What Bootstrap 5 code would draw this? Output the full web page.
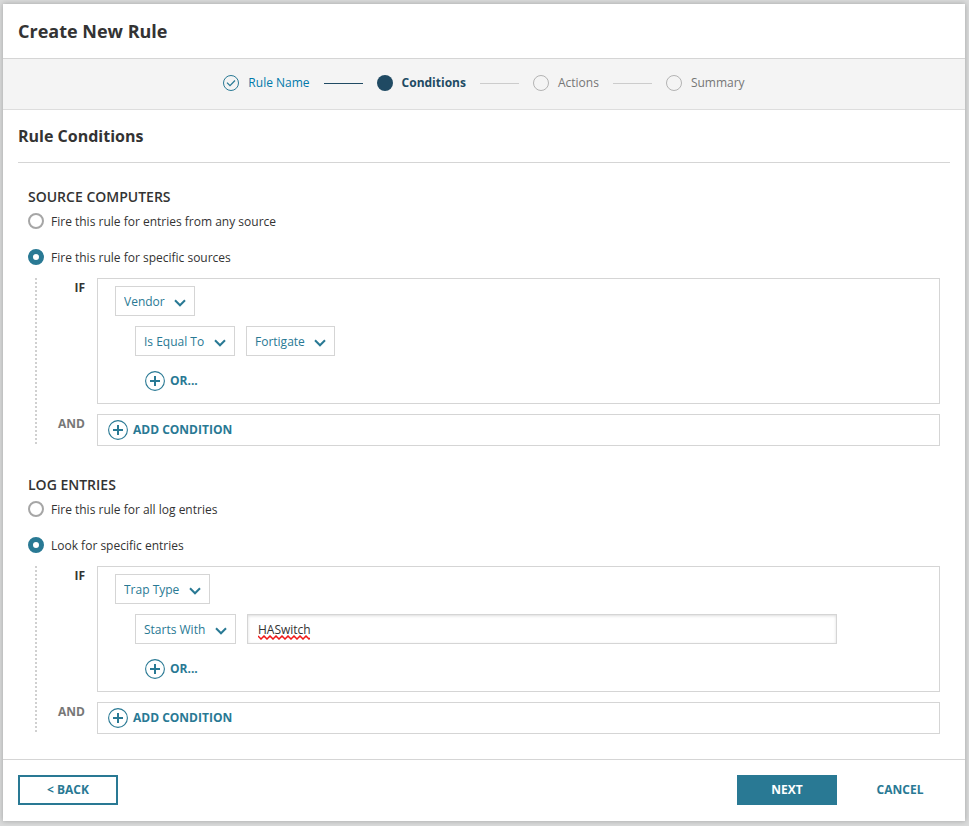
<!DOCTYPE html>
<html lang="en">
<head>
<meta charset="utf-8">
<meta name="viewport" content="width=device-width, initial-scale=1">
<title>Create New Rule</title>
<link href="https://cdn.jsdelivr.net/npm/bootstrap@5.3.0/dist/css/bootstrap.min.css" rel="stylesheet">
<style>
  :root { --teal: #297994; --navy: #204a63; --line: #d5d5d5; --ink: #333; }
  body { font-family: "Open Sans", "Noto Sans", sans-serif; font-size: 12px; line-height: 20px; color: var(--ink); background: #d9dada; padding: 4px 4px 5px 3px; }
  .dialog { background: #fff; box-shadow: 0 0 5px rgba(0,0,0,.25); }
  .dialog-head { padding: 15px 15px; border-bottom: 1px solid var(--line); }
  .dialog-head h1 { font-size: 18px; line-height: 24px; font-weight: 700; }
  .steps { background: #f4f4f4; border-bottom: 1px solid #ddd; padding: 14px 15px 16px; gap: 14px; }
  .step { display: flex; align-items: center; gap: 9px; color: #767676; text-decoration: none; }
  .step svg { width: 16px; height: 16px; flex: none; }
  .step-done { color: #0079aa; }
  .step-now { color: var(--navy); font-weight: 700; }
  .step-line { width: 39px; height: 1px; background: #ccc; }
  .step-line-done { background: var(--navy); }
  .dialog-main { padding: 0 15px; }
  .dialog-main h2 { font-size: 16px; line-height: 24px; font-weight: 700; padding: 14px 0; border-bottom: 1px solid var(--line); }
  .rule-group { margin: 24px 10px 29px; padding: 0; }
  .rule-group legend { font-size: 14px; line-height: 20px; font-weight: 600; float: none; }
  .rule-group + .rule-group { margin-bottom: 25px; }
  .choice { display: flex; align-items: center; height: 28px; gap: 7px; }
  .choice + .choice { margin: 8px 0 7px; }
  .choice label { padding-top: 2px; }
  .choice .form-check-input { width: 16px; height: 16px; margin: 0; border: 2px solid #a6a6a6; box-shadow: none; }
  .choice .form-check-input:checked { background: #fff; border: 5px solid var(--teal); }
  .rule-tree { margin-left: 7px; padding-left: 2px; gap: 10px; background: linear-gradient(#d0d0d0 50%, transparent 50%) left top / 2px 4px repeat-y; }
  .rule-line { gap: 12px; }
  .rule-word { width: 48px; text-align: right; font-weight: 700; flex: none; color: #777; }
  .rule-word-if { color: var(--ink); }
  .rule-box { border: 1px solid var(--line); }
  .rule-box-if { padding: 7px 17px 12px; }
  .rule-box-add { padding: 5px 10px; }
  .sub-row { margin: 10px 0 15px 20px; gap: 11px; }
  .pick { appearance: none; height: 30px; border: 1px solid var(--line); border-radius: 0; color: var(--teal); font-size: 12px; line-height: 18px; padding: 2px 29px 0 8px;
    background: #fff url("data:image/svg+xml,%3Csvg xmlns='http://www.w3.org/2000/svg' width='12' height='8' viewBox='0 0 12 8'%3E%3Cpath d='M1 1.3 6 6.3 11 1.3' fill='none' stroke='%23297994' stroke-width='2'/%3E%3C/svg%3E") no-repeat right 8px top 12px; }
  .entry { flex: 0 1 590px; min-width: 0; height: 30px; border: 1px solid var(--line); border-radius: 0; box-shadow: inset 0 1px 3px rgba(0,0,0,.14); padding: 0 10px; font-size: 12px; color: var(--ink);
    background: #fff url("data:image/svg+xml,%3Csvg xmlns='http://www.w3.org/2000/svg' width='52' height='5' viewBox='0 0 52 5'%3E%3Cpath d='M0 1 3 4 6 1 9 4 12 1 15 4 18 1 21 4 24 1 27 4 30 1 33 4 36 1 39 4 42 1 45 4 48 1 51 4 52 3' fill='none' stroke='%23f01818' stroke-width='1.5'/%3E%3C/svg%3E") no-repeat left 10px top 20px; }
  .adder { display: flex; align-items: center; gap: 5px; border: 0; background: none; padding: 0; color: var(--teal); font-size: 12px; line-height: 20px; font-weight: 700; }
  .adder svg { width: 20px; height: 20px; flex: none; }
  .adder-or { margin-left: 30px; }
  .dialog-foot { border-top: 1px solid var(--line); padding: 15px 15px 16px; gap: 13px; }
  .foot-btn { width: 100px; height: 30px; padding: 0; border: 2px solid transparent; border-radius: 0; font-size: 12px; line-height: 20px; font-weight: 700; color: var(--teal); }
  .foot-back { border-color: var(--teal); }
  .foot-next { background: var(--teal); color: #fff; }
</style>
<script src="https://cdn.jsdelivr.net/npm/bootstrap@5.3.0/dist/js/bootstrap.bundle.min.js"></script>
</head>
<body>
<svg class="d-none">
  <symbol id="plus" viewBox="0 0 20 20"><circle cx="10" cy="10" r="9.4" fill="none" stroke="#297994" stroke-width="1.1"/><path d="M10 5v10M5 10h10" stroke="#297994" stroke-width="2"/></symbol>
</svg>
<form class="dialog">
  <header class="dialog-head"><h1 class="m-0">Create New Rule</h1></header>
  <nav class="steps d-flex justify-content-center align-items-center" aria-label="Steps">
    <a class="step step-done" href="#"><svg viewBox="0 0 16 16" fill="none" stroke="#297994"><circle cx="8" cy="8" r="7.5"/><path d="M4 7.6 7 10.6 12 5.5" stroke-width="1.3"/></svg>Rule Name</a>
    <span class="step-line step-line-done"></span>
    <span class="step step-now" aria-current="step"><svg viewBox="0 0 16 16"><circle cx="8" cy="8" r="8" fill="#204a63"/></svg>Conditions</span>
    <span class="step-line"></span>
    <span class="step"><svg viewBox="0 0 16 16"><circle cx="8" cy="8" r="7.5" fill="none" stroke="#b3b3b3"/></svg>Actions</span>
    <span class="step-line"></span>
    <span class="step"><svg viewBox="0 0 16 16"><circle cx="8" cy="8" r="7.5" fill="none" stroke="#b3b3b3"/></svg>Summary</span>
  </nav>
  <main class="dialog-main">
    <h2 class="m-0">Rule Conditions</h2>

    <fieldset class="rule-group">
      <legend class="m-0">SOURCE COMPUTERS</legend>
      <div class="choice"><input class="form-check-input" type="radio" name="source" id="source-any"><label for="source-any">Fire this rule for entries from any source</label></div>
      <div class="choice"><input class="form-check-input" type="radio" name="source" id="source-some" checked><label for="source-some">Fire this rule for specific sources</label></div>
      <div class="rule-tree d-flex flex-column">
        <div class="rule-line d-flex">
          <span class="rule-word rule-word-if">IF</span>
          <div class="rule-box rule-box-if flex-grow-1">
            <div class="d-flex"><select class="pick" aria-label="Source field"><option>Vendor</option></select></div>
            <div class="sub-row d-flex">
              <select class="pick" aria-label="Source comparison"><option>Is Equal To</option></select>
              <select class="pick" aria-label="Source value"><option>Fortigate</option></select>
            </div>
            <button class="adder adder-or" type="button"><svg><use href="#plus"/></svg>OR...</button>
          </div>
        </div>
        <div class="rule-line d-flex">
          <span class="rule-word">AND</span>
          <div class="rule-box rule-box-add flex-grow-1"><button class="adder" type="button"><svg><use href="#plus"/></svg>ADD CONDITION</button></div>
        </div>
      </div>
    </fieldset>

    <fieldset class="rule-group">
      <legend class="m-0">LOG ENTRIES</legend>
      <div class="choice"><input class="form-check-input" type="radio" name="log" id="log-all"><label for="log-all">Fire this rule for all log entries</label></div>
      <div class="choice"><input class="form-check-input" type="radio" name="log" id="log-some" checked><label for="log-some">Look for specific entries</label></div>
      <div class="rule-tree d-flex flex-column">
        <div class="rule-line d-flex">
          <span class="rule-word rule-word-if">IF</span>
          <div class="rule-box rule-box-if flex-grow-1">
            <div class="d-flex"><select class="pick" aria-label="Log field"><option>Trap Type</option></select></div>
            <div class="sub-row d-flex">
              <select class="pick" aria-label="Log comparison"><option>Starts With</option></select>
              <input class="entry" type="text" value="HASwitch" aria-label="Log value">
            </div>
            <button class="adder adder-or" type="button"><svg><use href="#plus"/></svg>OR...</button>
          </div>
        </div>
        <div class="rule-line d-flex">
          <span class="rule-word">AND</span>
          <div class="rule-box rule-box-add flex-grow-1"><button class="adder" type="button"><svg><use href="#plus"/></svg>ADD CONDITION</button></div>
        </div>
      </div>
    </fieldset>
  </main>
  <footer class="dialog-foot d-flex">
    <button class="btn foot-btn foot-back me-auto" type="button">&lt; BACK</button>
    <button class="btn foot-btn foot-next" type="button">NEXT</button>
    <button class="btn foot-btn" type="button">CANCEL</button>
  </footer>
</form>
</body>
</html>
